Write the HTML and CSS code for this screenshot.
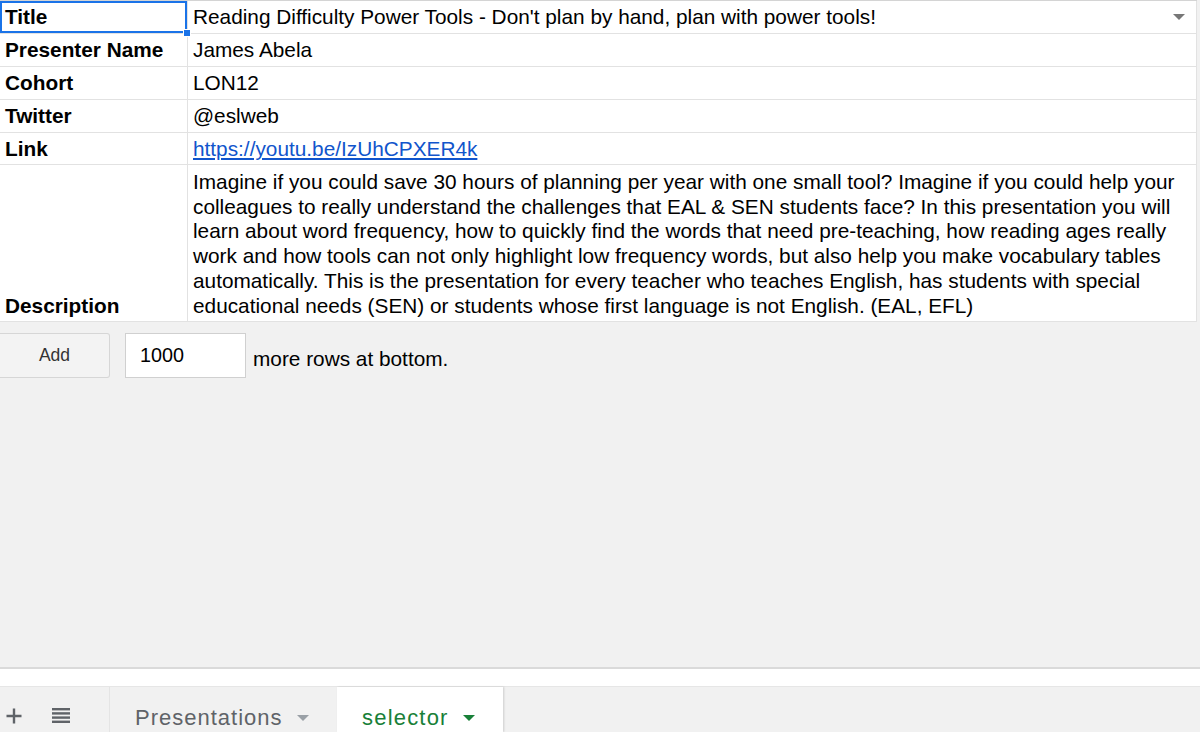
FILE: index.html
```html
<!DOCTYPE html>
<html>
<head>
<meta charset="utf-8">
<link rel="stylesheet" href="styles.css">
</head>
<body>
<div class="page">
  <div class="sheet">
    <div class="cell label selected">Title<span class="handle"></span></div>
    <div class="cell value">Reading Difficulty Power Tools - Don't plan by hand, plan with power tools!<span class="dd"></span></div>
    <div class="cell label">Presenter Name</div>
    <div class="cell value">James Abela</div>
    <div class="cell label">Cohort</div>
    <div class="cell value">LON12</div>
    <div class="cell label">Twitter</div>
    <div class="cell value">@eslweb</div>
    <div class="cell label">Link</div>
    <div class="cell value"><a class="link" href="#">https://youtu.be/IzUhCPXER4k</a></div>
    <div class="cell label desc-label">Description</div>
    <div class="cell value desc">Imagine if you could save 30 hours of planning per year with one small tool? Imagine if you could help your<br>colleagues to really understand the challenges that EAL &amp; SEN students face? In this presentation you will<br>learn about word frequency, how to quickly find the words that need pre-teaching, how reading ages really<br>work and how tools can not only highlight low frequency words, but also help you make vocabulary tables<br>automatically. This is the presentation for every teacher who teaches English, has students with special<br>educational needs (SEN) or students whose first language is not English. (EAL, EFL)</div>
  </div>
  <div class="addrow">
    <button class="addbtn">Add</button>
    <div class="count">1000</div>
    <span class="more">more rows at bottom.</span>
  </div>
  <div class="spacer"></div>
  <div class="scrollstrip"></div>
  <div class="tabbar">
    <div class="tools">
      <svg class="ico" width="18" height="18" viewBox="0 0 18 18"><path d="M7.8 1.5h2.4v6.3H16.5v2.4h-6.3V16.5H7.8v-6.3H1.5V7.8h6.3z" fill="#5f6368"/></svg>
      <svg class="ico menu" width="20" height="18" viewBox="0 0 20 18"><rect x="1" y="1" width="18" height="2.4" fill="#5f6368"/><rect x="1" y="5.2" width="18" height="2.4" fill="#5f6368"/><rect x="1" y="9.4" width="18" height="2.4" fill="#5f6368"/><rect x="1" y="13.6" width="18" height="2.4" fill="#5f6368"/></svg>
    </div>
    <div class="tab">Presentations<span class="caret grey"></span></div>
    <div class="tab active">selector<span class="caret green"></span></div>
  </div>
</div>
</body>
</html>
```
FILE: styles.css
```css
html, body {
  margin: 0;
  padding: 0;
}
body {
  background: #f1f1f1;
  font-family: "Liberation Sans", Arial, sans-serif;
  color: #000;
  width: 1200px;
  height: 732px;
  overflow: hidden;
}
.page {
  display: flex;
  flex-direction: column;
  height: 732px;
}
.sheet {
  display: grid;
  grid-template-columns: 188px 1009px;
  grid-template-rows: 33px 33px 33px 33px 32px 157px;
  background: #fff;
  border-top: 1px solid #d4d4d4;
  width: 1197px;
  box-sizing: border-box;
}
.cell {
  font-size: 20.8px;
  line-height: 32px;
  padding: 0 5px;
  border-bottom: 1px solid #e2e2e2;
  border-right: 1px solid #e2e2e2;
  white-space: nowrap;
  position: relative;
  overflow: visible;
}
.label {
  font-weight: bold;
}
.selected {
  box-shadow: inset 0 0 0 2px #1a73e8;
  z-index: 2;
}
.handle {
  position: absolute;
  right: -4px;
  bottom: -4px;
  width: 6px;
  height: 6px;
  background: #1a73e8;
  border: 1px solid #fff;
}
.dd {
  position: absolute;
  right: 11px;
  top: 13px;
  width: 0;
  height: 0;
  border-left: 6px solid transparent;
  border-right: 6px solid transparent;
  border-top: 6px solid #777;
}
.link {
  color: #1155cc;
  text-decoration: underline;
}
.desc-label {
  display: flex;
  align-items: flex-end;
  line-height: 26px;
  padding-bottom: 2px;
}
.desc {
  line-height: 24.7px;
  padding-top: 5px;
}
.addrow {
  display: flex;
  align-items: center;
  height: 44px;
  margin-top: 11px;
}
.addbtn {
  width: 110px;
  height: 45px;
  box-sizing: border-box;
  background: #f3f3f3;
  border: 1px solid #d6d6d6;
  border-left: none;
  border-radius: 0 3px 3px 0;
  font-family: "Liberation Sans", Arial, sans-serif;
  font-size: 17.5px;
  color: #333;
  padding: 0;
  margin: 0;
}
.count {
  width: 121px;
  height: 45px;
  box-sizing: border-box;
  background: #fff;
  border: 1px solid #d0d0d0;
  margin-left: 15px;
  font-size: 19.8px;
  line-height: 43px;
  padding-left: 14px;
}
.more {
  font-size: 20.8px;
  margin-left: 7px;
  margin-top: 8px;
}
.spacer {
  flex: 1;
}
.scrollstrip {
  height: 17px;
  background: #fff;
  border-top: 2px solid #dadada;
}
.tabbar {
  display: flex;
  height: 45px;
  background: #f1f1f1;
  border-top: 1px solid #e6e6e6;
}
.tools {
  width: 109px;
  display: flex;
  align-items: center;
  padding-top: 13px;
  box-sizing: border-box;
}
.ico {
  margin-left: 5px;
}
.menu {
  margin-left: 28px;
}
.tab {
  display: flex;
  align-items: center;
  padding-top: 16px;
  box-sizing: border-box;
  font-size: 22px;
  letter-spacing: 1px;
  color: #5f6368;
  width: 228px;
  padding-left: 25px;
  border-left: 1px solid #e4e4e4;
}
.tab.active {
  background: #fff;
  color: #188038;
  width: 166px;
  padding-left: 25px;
  letter-spacing: 1.2px;
  border-left: none;
  box-shadow: 1px 0 2px rgba(0,0,0,0.15);
}
.caret {
  display: inline-block;
  width: 0;
  height: 0;
  border-left: 6px solid transparent;
  border-right: 6px solid transparent;
  border-top: 6px solid;
  margin-left: 14px;
}
.caret.grey {
  border-top-color: #9aa0a6;
}
.caret.green {
  border-top-color: #188038;
}
```
